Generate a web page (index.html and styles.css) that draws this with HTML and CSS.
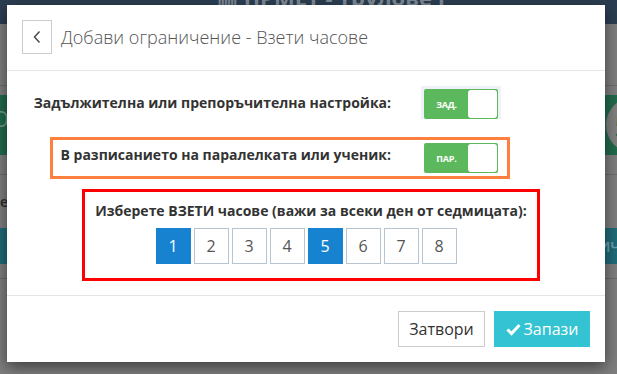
FILE: index.html
```html
<!DOCTYPE html>
<html lang="bg">
<head>
<meta charset="utf-8">
<title>Добави ограничение</title>
<link rel="stylesheet" href="styles.css">
</head>
<body>
<div class="page">
  <div class="topbar"><span class="brand">▥ ПРМЕТ - Трулове I</span></div>
  <div class="gap g1"></div>
  <div class="line"></div>
  <div class="gap g2"></div>
  <div class="green-row"><span class="ltxt">О</span><span class="circle">5</span></div>
  <div class="gap g3"></div>
  <div class="line"></div>
  <div class="text-row"><span class="ltxt2">не</span></div>
  <div class="teal-row"><span class="rtxt">ИЧ</span></div>
  <div class="gap g4"></div>
  <div class="line"></div>
</div>

<div class="modal">
  <div class="modal-header">
    <button class="back-btn" type="button">
      <svg width="10" height="14" viewBox="0 0 10 14"><polyline points="7.5,1.5 2.5,7 7.5,12.5" fill="none" stroke="#444" stroke-width="1.4"/></svg>
    </button>
    <h4 class="modal-title">Добави ограничение - Взети часове</h4>
  </div>
  <div class="modal-body">
    <div class="setting-row">
      <div class="setting-label">Задължителна или препоръчителна настройка:</div>
      <div class="toggle-wrap focused">
        <div class="toggle"><span class="toggle-text">ЗАД.</span><span class="knob"></span></div>
      </div>
    </div>
    <div class="orange-box">
      <div class="setting-row inner">
        <div class="setting-label narrow">В разписанието на паралелката или ученик:</div>
        <div class="toggle-wrap">
          <div class="toggle"><span class="toggle-text">ПАР.</span><span class="knob"></span></div>
        </div>
      </div>
    </div>
    <div class="red-box">
      <div class="hours-label">Изберете ВЗЕТИ часове (важи за всеки ден от седмицата):</div>
      <div class="hours">
        <span class="hour active">1</span>
        <span class="hour">2</span>
        <span class="hour">3</span>
        <span class="hour">4</span>
        <span class="hour active">5</span>
        <span class="hour">6</span>
        <span class="hour">7</span>
        <span class="hour">8</span>
      </div>
    </div>
  </div>
  <div class="modal-footer">
    <button class="btn btn-default" type="button">Затвори</button>
    <button class="btn btn-save" type="button">
      <svg width="15" height="13" viewBox="0 0 15 13"><path d="M1.5 6.5 L5.5 10.5 L13.5 2" fill="none" stroke="#fff" stroke-width="3"/></svg>
      Запази
    </button>
  </div>
</div>
</body>
</html>
```

FILE: styles.css
```css
* { box-sizing: border-box; }
html, body { margin: 0; padding: 0; }
body {
  width: 617px;
  height: 374px;
  overflow: hidden;
  background: #7e7e7e;
  font-family: "Open Sans", "Liberation Sans", sans-serif;
  position: relative;
}
.page { display: flex; flex-direction: column; }
.topbar {
  height: 24px;
  background: #2b3e51;
  overflow: hidden;
  text-align: left;
  padding-left: 217px;
}
.brand {
  display: block;
  margin-top: -15px;
  font-size: 22px;
  font-weight: 700;
  color: #7f8a96;
  line-height: 24px;
}
.gap.g1 { height: 61px; }
.gap.g2 { height: 9px; }
.gap.g3 { height: 19px; }
.gap.g4 { height: 14px; }
.line { height: 1px; background: #6b6b6b; }
.green-row {
  height: 60px;
  background: #216a4b;
  display: flex;
  align-items: center;
  justify-content: space-between;
}
.ltxt { color: #6f9b86; font-size: 22px; margin-left: -8px; margin-top: -14px; }
.circle {
  width: 56px; height: 56px; border-radius: 50%;
  background: #808080;
  color: #216a4b;
  font-size: 30px;
  display: flex; align-items: center; justify-content: flex-start;
  padding-left: 8px;
  margin-right: -45px;
}
.text-row { height: 53px; display: flex; align-items: center; }
.ltxt2 { font-size: 14px; font-weight: 600; color: #2a2a2a; margin-left: -9px; }
.teal-row {
  height: 36px;
  background: #1f6b78;
  display: flex; align-items: center; justify-content: flex-end;
}
.rtxt { color: #6aa3ad; font-size: 15px; font-weight: 600; margin-right: -4px; }

.modal {
  position: absolute;
  left: 7px;
  top: 5px;
  width: 598px;
  height: 357px;
  background: #fff;
  box-shadow: 0 5px 14px rgba(0,0,0,0.5);
  display: flex;
  flex-direction: column;
}
.modal-header {
  height: 66px;
  border-bottom: 1px solid #e5e5e5;
  display: flex;
  align-items: flex-start;
  padding: 15px 15px 0 15px;
}
.back-btn {
  width: 30px;
  height: 34px;
  border: 1px solid #cccccc;
  background: #fff;
  padding: 0;
  display: flex;
  align-items: center;
  justify-content: center;
}
.modal-title {
  margin: 0 0 0 9px;
  font-size: 18px;
  font-weight: 300;
  color: #555;
  line-height: 34px;
}
.modal-body {
  height: 225px;
  border-bottom: 1px solid #e5e5e5;
  padding-top: 15px;
  display: flex;
  flex-direction: column;
}
.setting-row {
  display: flex;
  align-items: flex-start;
  gap: 30px;
}
.setting-label {
  width: 384px;
  text-align: right;
  font-size: 14px;
  font-weight: 700;
  color: #333;
  line-height: 34px;
  white-space: nowrap;
}
.setting-label.narrow { width: 338px; line-height: 30px; }
.toggle-wrap {
  padding: 3px 3px 0 3px;
}
.toggle-wrap.focused { background: #eef2f7; }
.toggle {
  width: 74px;
  height: 30px;
  background: #5cb85c;
  border-radius: 2px;
  display: flex;
  align-items: center;
  padding: 1px;
}
.toggle-text {
  flex: 1;
  color: #fff;
  font-size: 9px;
  font-weight: 700;
  text-align: center;
  letter-spacing: -0.2px;
}
.knob {
  width: 29px;
  height: 28px;
  background: #fff;
  border-radius: 3px;
}
.orange-box {
  margin: 17px 0 0 43px;
  width: 460px;
  height: 42px;
  border: 3px solid #ff7f3f;
}
.setting-row.inner { gap: 30px; padding-top: 0; }
.red-box {
  margin: 10px 0 0 75px;
  width: 458px;
  height: 92px;
  border: 3px solid #ff0000;
  padding-top: 10px;
  display: flex;
  flex-direction: column;
  align-items: center;
}
.hours-label {
  font-size: 14px;
  font-weight: 700;
  color: #333;
  line-height: 18px;
  white-space: nowrap;
}
.hours {
  display: flex;
  gap: 3px;
  margin-top: 8px;
  padding-right: 10px;
}
.hour {
  width: 35px;
  height: 36px;
  border: 1px solid #b7c4d2;
  background: #fff;
  color: #555;
  font-size: 16px;
  display: flex;
  align-items: center;
  justify-content: center;
}
.hour.active {
  background: #1783d0;
  border-color: #1783d0;
  color: #fff;
}
.modal-footer {
  flex: 1;
  display: flex;
  justify-content: flex-end;
  align-items: flex-start;
  gap: 9px;
  padding: 15px 15px 0 0;
}
.btn {
  height: 36px;
  font-family: "Open Sans", "Liberation Sans", sans-serif;
  font-size: 16px;
  padding: 0;
  display: flex;
  align-items: center;
  justify-content: center;
  gap: 3px;
}
.btn-default {
  width: 87px;
  background: #fff;
  border: 1px solid #ccc;
  color: #333;
}
.btn-save {
  width: 96px;
  background: #33c3d3;
  border: 1px solid #33c3d3;
  color: #fff;
}
```
